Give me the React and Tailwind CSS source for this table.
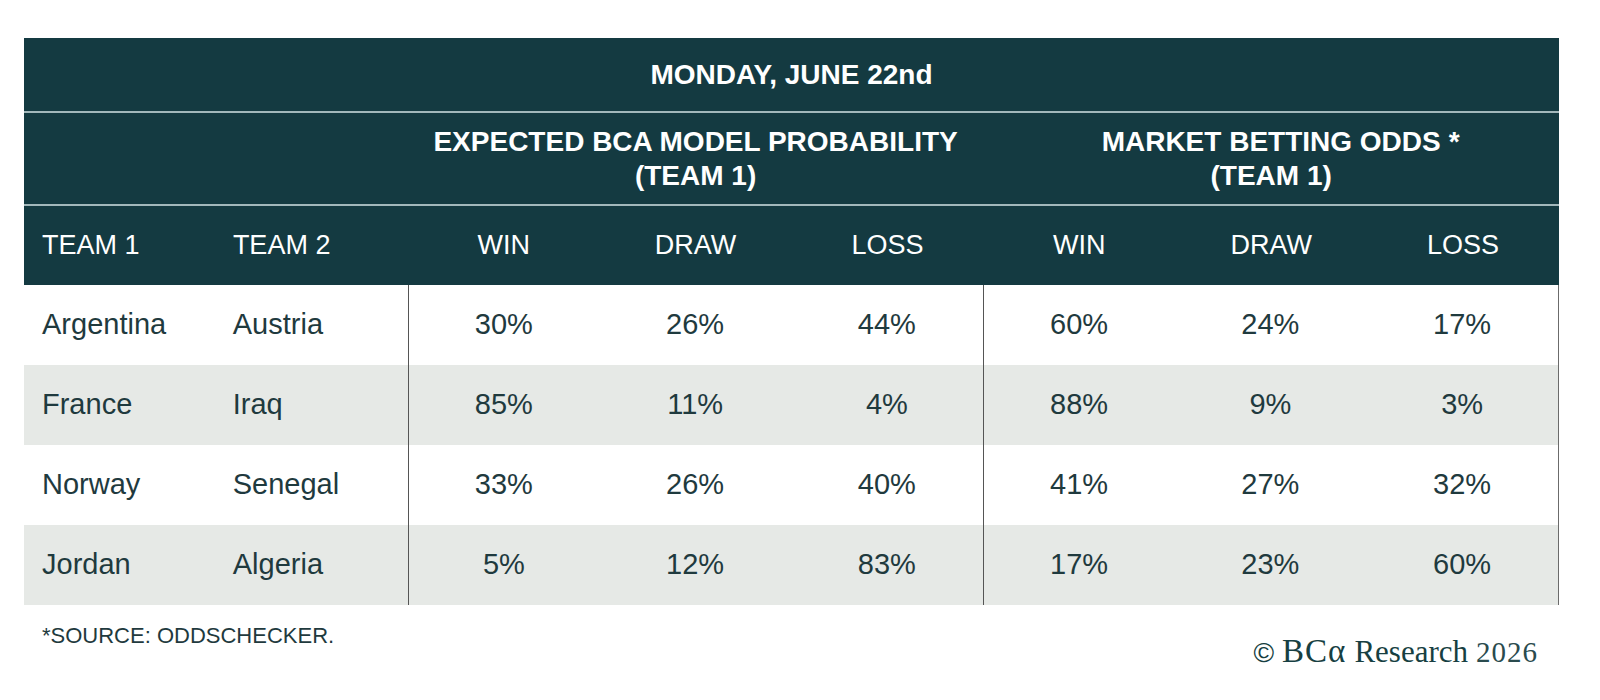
import React from "react";

const rows = [
  { team1: "Argentina", team2: "Austria", model: ["30%", "26%", "44%"], market: ["60%", "24%", "17%"] },
  { team1: "France", team2: "Iraq", model: ["85%", "11%", "4%"], market: ["88%", "9%", "3%"] },
  { team1: "Norway", team2: "Senegal", model: ["33%", "26%", "40%"], market: ["41%", "27%", "32%"] },
  { team1: "Jordan", team2: "Algeria", model: ["5%", "12%", "83%"], market: ["17%", "23%", "60%"] },
];

const labels = ["WIN", "DRAW", "LOSS"];

const App = () => {
  return (
    <div className="min-h-[700px] w-[1600px] bg-white pt-[38px] pl-6 font-['Liberation_Sans',Arial,sans-serif]">
      <div className="w-[1535px]">
        <div className="bg-[#143a41] text-white">
          <div className="h-[75px] flex items-center justify-center border-b-2 border-[#a3b8bb] text-[28px] font-bold">
            MONDAY, JUNE 22nd
          </div>
          <div className="h-[93px] grid grid-cols-8 border-b-2 border-[#a3b8bb] text-[28px] font-bold leading-[34px]">
            <div className="col-span-2" />
            <div className="col-span-3 flex flex-col items-center justify-center">
              <span>EXPECTED BCA MODEL PROBABILITY</span>
              <span>(TEAM 1)</span>
            </div>
            <div className="col-span-3 flex flex-col items-center justify-center">
              <span className="relative">
                MARKET BETTING ODDS
                <span className="absolute left-full top-0 pl-2">*</span>
              </span>
              <span>(TEAM 1)</span>
            </div>
          </div>
          <div className="h-[79px] grid grid-cols-8 items-center text-[27px]">
            <div className="pl-[18px]">TEAM 1</div>
            <div className="pl-[17px]">TEAM 2</div>
            {[...labels, ...labels].map((label, i) => (
              <div key={i} className="text-center">
                {label}
              </div>
            ))}
          </div>
        </div>

        {rows.map((row, i) => (
          <div
            key={row.team1}
            className={`h-[80px] grid grid-cols-8 items-stretch text-[29px] text-[#1f3a3e] border-r border-[#6b6b6b] ${
              i % 2 === 1 ? "bg-[#e6e9e6]" : "bg-white"
            }`}
          >
            <div className="flex items-center pl-[18px]">{row.team1}</div>
            <div className="flex items-center pl-[17px]">{row.team2}</div>
            <div className="flex items-center justify-center border-l border-[#555]">{row.model[0]}</div>
            <div className="flex items-center justify-center">{row.model[1]}</div>
            <div className="flex items-center justify-center">{row.model[2]}</div>
            <div className="flex items-center justify-center border-l border-[#555]">{row.market[0]}</div>
            <div className="flex items-center justify-center">{row.market[1]}</div>
            <div className="flex items-center justify-center">{row.market[2]}</div>
          </div>
        ))}

        <div className="flex items-start justify-between pt-[14px]">
          <div className="pl-[18px] text-[22px] text-[#1f3a3e]">*SOURCE: ODDSCHECKER.</div>
          <div className="flex items-baseline gap-[8px] pr-[21px] pt-[8px] text-[#173f42] font-['Liberation_Serif','Times_New_Roman',serif]">
            <span className="text-[28px] font-['Liberation_Sans',Arial,sans-serif]">©</span>
            <span className="text-[33px] tracking-[1px]">BCα</span>
            <span className="text-[31px]">Research</span>
            <span className="text-[29px] tracking-[1px] text-[#2a4b4e]">2026</span>
          </div>
        </div>
      </div>
    </div>
  );
};

export default App;
